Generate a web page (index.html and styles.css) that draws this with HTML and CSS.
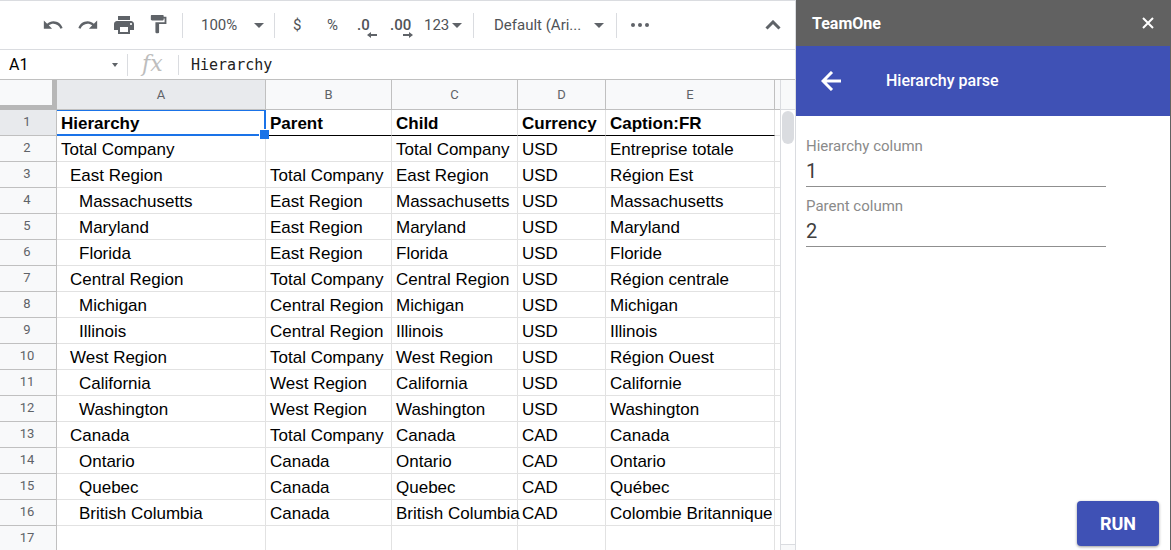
FILE: index.html
```html
<!DOCTYPE html>
<html lang="en">
<head>
<meta charset="utf-8">
<title>Hierarchy sheet</title>
<link rel="stylesheet" href="styles.css">
</head>
<body>
<main class="editor">
  <div class="toolbar">
    <div class="actions">
      <button class="tool" aria-label="Undo"><svg width="22" height="22" viewBox="0 0 24 24"><path d="M12.5 8c-2.65 0-5.05.99-6.9 2.6L2 7v9h9l-3.62-3.62c1.39-1.16 3.16-1.88 5.12-1.88 3.54 0 6.55 2.31 7.6 5.5l2.37-.78C21.08 11.03 17.15 8 12.5 8z"/></svg></button>
      <button class="tool" aria-label="Redo"><svg width="22" height="22" viewBox="0 0 24 24"><path d="M18.4 10.6C16.55 8.99 14.15 8 11.5 8c-4.65 0-8.58 3.03-9.96 7.22L3.9 16c1.05-3.19 4.05-5.5 7.6-5.5 1.95 0 3.73.72 5.12 1.88L13 16h9V7l-3.6 3.6z"/></svg></button>
      <button class="tool" aria-label="Print"><svg width="24" height="24" viewBox="0 0 24 24"><path d="M19 8H5c-1.66 0-3 1.34-3 3v6h4v4h12v-4h4v-6c0-1.66-1.34-3-3-3zm-3 11H8v-5h8v5zm3-7c-.55 0-1-.45-1-1s.45-1 1-1 1 .45 1 1-.45 1-1 1zM18 3H6v4h12V3z"/></svg></button>
      <button class="tool" aria-label="Paint format"><svg width="22" height="22" viewBox="0 0 24 24"><path d="M18 4V3c0-.55-.45-1-1-1H5c-.55 0-1 .45-1 1v4c0 .55.45 1 1 1h12c.55 0 1-.45 1-1V6h1v4H9v11c0 .55.45 1 1 1h2c.55 0 1-.45 1-1v-9h8V4h-3z" transform="translate(-2 -1)"/></svg></button>
    </div>
    <button class="menu zoom">100%<i class="caret"></i></button>
    <div class="formats">
      <button class="tool">$</button>
      <button class="tool percent">%</button>
      <button class="tool decimal">.0<svg class="arrow" width="10" height="6" viewBox="0 0 10 6"><path d="M0 3l4-3v2h6v2H4v2z"/></svg></button>
      <button class="tool decimal">.00<svg class="arrow" width="10" height="6" viewBox="0 0 10 6"><path d="M10 3L6 0v2H0v2h6v2z"/></svg></button>
      <button class="tool number">123<i class="caret"></i></button>
    </div>
    <button class="menu font">Default (Ari...<i class="caret"></i></button>
    <button class="tool more" aria-label="More"><svg width="18" height="4" viewBox="0 0 18 4"><circle cx="2" cy="2" r="2"/><circle cx="9" cy="2" r="2"/><circle cx="16" cy="2" r="2"/></svg></button>
    <button class="tool collapse" aria-label="Hide menus"><svg width="16" height="10" viewBox="0 0 16 10"><path class="line" d="M1.5 8.5L8 2l6.500 6.500"/></svg></button>
  </div>
  <div class="formula">
    <button class="name">A1<i class="caret small"></i></button>
    <span class="fx">fx</span>
    <input class="value" aria-label="Formula" value="Hierarchy">
  </div>
  <div class="sheet">
    <div class="grid">
      <table>
        <colgroup><col class="c-num"><col class="c-a"><col class="c-b"><col class="c-b"><col class="c-d"><col class="c-e"><col></colgroup>
        <thead><tr><th class="corner"></th><th class="active">A</th><th>B</th><th>C</th><th>D</th><th>E</th><th></th></tr></thead>
        <tbody>
          <tr class="titles"><th class="active">1</th><td class="selected">Hierarchy</td><td>Parent</td><td>Child</td><td>Currency</td><td>Caption:FR</td><td></td></tr>
          <tr><th>2</th><td>Total Company</td><td></td><td>Total Company</td><td>USD</td><td>Entreprise totale</td><td></td></tr>
          <tr><th>3</th><td class="l1">East Region</td><td>Total Company</td><td>East Region</td><td>USD</td><td>Région Est</td><td></td></tr>
          <tr><th>4</th><td class="l2">Massachusetts</td><td>East Region</td><td>Massachusetts</td><td>USD</td><td>Massachusetts</td><td></td></tr>
          <tr><th>5</th><td class="l2">Maryland</td><td>East Region</td><td>Maryland</td><td>USD</td><td>Maryland</td><td></td></tr>
          <tr><th>6</th><td class="l2">Florida</td><td>East Region</td><td>Florida</td><td>USD</td><td>Floride</td><td></td></tr>
          <tr><th>7</th><td class="l1">Central Region</td><td>Total Company</td><td>Central Region</td><td>USD</td><td>Région centrale</td><td></td></tr>
          <tr><th>8</th><td class="l2">Michigan</td><td>Central Region</td><td>Michigan</td><td>USD</td><td>Michigan</td><td></td></tr>
          <tr><th>9</th><td class="l2">Illinois</td><td>Central Region</td><td>Illinois</td><td>USD</td><td>Illinois</td><td></td></tr>
          <tr><th>10</th><td class="l1">West Region</td><td>Total Company</td><td>West Region</td><td>USD</td><td>Région Ouest</td><td></td></tr>
          <tr><th>11</th><td class="l2">California</td><td>West Region</td><td>California</td><td>USD</td><td>Californie</td><td></td></tr>
          <tr><th>12</th><td class="l2">Washington</td><td>West Region</td><td>Washington</td><td>USD</td><td>Washington</td><td></td></tr>
          <tr><th>13</th><td class="l1">Canada</td><td>Total Company</td><td>Canada</td><td>CAD</td><td>Canada</td><td></td></tr>
          <tr><th>14</th><td class="l2">Ontario</td><td>Canada</td><td>Ontario</td><td>CAD</td><td>Ontario</td><td></td></tr>
          <tr><th>15</th><td class="l2">Quebec</td><td>Canada</td><td>Quebec</td><td>CAD</td><td>Québec</td><td></td></tr>
          <tr><th>16</th><td class="l2">British Columbia</td><td>Canada</td><td>British Columbia</td><td>CAD</td><td>Colombie Britannique</td><td></td></tr>
          <tr><th>17</th><td></td><td></td><td></td><td></td><td></td><td></td></tr>
        </tbody>
      </table>
    </div>
    <div class="scrollbar"><div class="track"><div class="thumb"></div></div></div>
  </div>
</main>
<aside class="sidebar">
  <header class="brand"><h1>TeamOne</h1><button class="close" aria-label="Close"><svg width="12" height="12" viewBox="0 0 12 12"><path d="M1 1l10 10M11 1L1 11"/></svg></button></header>
  <div class="appbar"><button class="back" aria-label="Back"><svg width="22" height="20" viewBox="0 0 22 20"><path d="M20 10H2M11 1L2 10l9 9"/></svg></button><h2>Hierarchy parse</h2></div>
  <form class="form">
    <label for="hierarchy">Hierarchy column</label>
    <input id="hierarchy" value="1">
    <label for="parent">Parent column</label>
    <input id="parent" value="2">
    <button class="run" type="button">RUN</button>
  </form>
</aside>
</body>
</html>
```

FILE: styles.css
```css
* { box-sizing: border-box; }
body {
  margin: 0;
  display: flex;
  height: 100vh;
  overflow: hidden;
  font-family: Roboto, "Liberation Sans", sans-serif;
  background: #fff;
}
button {
  padding: 0;
  border: 0;
  background: none;
  font: inherit;
  color: inherit;
}
svg { display: block; }
input { border: 0; outline: 0; background: none; padding: 0; }

.editor {
  flex: 1;
  min-width: 0;
  display: flex;
  flex-direction: column;
  border-right: 1px solid #dadce0;
}
.toolbar {
  flex: none;
  display: flex;
  align-items: center;
  height: 50px;
  padding-right: 14px;
  border-top: 1px solid #dadce0;
  border-bottom: 1px solid #dadce0;
  font-size: 15px;
  color: #505357;
}
.toolbar svg { fill: #5f6368; }
.actions {
  display: flex;
  align-items: center;
  gap: 13px;
  width: 183px;
  height: 25px;
  padding-left: 42px;
  border-right: 1px solid #dadce0;
}
.menu {
  display: flex;
  align-items: center;
  justify-content: space-between;
  height: 25px;
  border-right: 1px solid #dadce0;
}
.zoom { width: 92px; padding: 0 10px 0 18px; }
.font { width: 143px; padding: 0 12px 0 20px; }
.caret {
  border: 5px solid transparent;
  border-top-color: #5f6368;
  border-bottom: 0;
}
.caret.small { border-width: 4px 3px 0; }
.formats {
  display: flex;
  align-items: center;
  height: 25px;
  width: 199px;
  padding-left: 18px;
  border-right: 1px solid #dadce0;
}
.formats .tool { width: 34px; text-align: left; }
.formats .percent { width: 30px; }
.formats .decimal { position: relative; width: 33px; font-weight: 500; }
.formats .number { display: flex; align-items: center; gap: 3px; width: auto; margin-left: 1px; }
.arrow { position: absolute; right: 13px; bottom: -4px; }
.decimal + .decimal .arrow { right: 10px; }
.more { margin-left: 14px; }
.collapse { margin-left: auto; }
.line { fill: none; stroke: #5f6368; stroke-width: 3; }

.formula {
  flex: none;
  display: flex;
  align-items: center;
  height: 30px;
  border-bottom: 1px solid #c0c0c0;
}
.formula .name {
  display: flex;
  align-items: center;
  justify-content: space-between;
  width: 128px;
  height: 22px;
  padding: 0 9px;
  border-right: 1px solid #dadce0;
  font-size: 16px;
  color: #000;
}
.fx {
  width: 51px;
  height: 20px;
  padding-left: 14px;
  border-right: 1px solid #dadce0;
  font: italic 22px/18px "DejaVu Serif", serif;
  color: #bdbdbd;
}
.value {
  flex: 1;
  min-width: 0;
  padding-left: 12px;
  font: 15px "DejaVu Sans Mono", monospace;
  color: #222;
}

.sheet { flex: 1; min-height: 0; display: flex; }
.grid { flex: 1; min-width: 0; overflow: hidden; }
table {
  width: 100%;
  table-layout: fixed;
  border-collapse: separate;
  border-spacing: 0;
}
.c-num { width: 57px; }
.c-a { width: 209px; }
.c-b { width: 126px; }
.c-d { width: 88px; }
.c-e { width: 169px; }
th, td {
  height: 26px;
  border-right: 1px solid #e2e2e2;
  border-bottom: 1px solid #e2e2e2;
  white-space: nowrap;
}
td {
  padding: 2px 0 0 4px;
  font-family: "Liberation Sans", Arial, sans-serif;
  font-size: 17px;
  line-height: 23px;
  color: #000;
}
th {
  padding: 0;
  background: #f8f9fa;
  border-color: #c0c0c0;
  font-size: 13px;
  font-weight: 400;
  line-height: 23px;
  color: #5f6368;
  text-align: center;
}
tbody th { padding: 0 2px 2px 0; }
thead th { height: 30px; }
th.active { background: #e8eaed; }
th.corner { border: solid #b7b7b7; border-width: 0 5px 5px 0; }
tr > :last-child { border-right: 0; }
.l1 { padding-left: 13px; }
.l2 { padding-left: 22px; }
.titles td { font-weight: 700; border-bottom-color: #000; }
.titles td:last-child { border-bottom-color: #e2e2e2; }
.titles .selected { position: relative; box-shadow: inset 0 1px #1a73e8, inset -1px -1px #1a73e8; border-color: #1a73e8; }
.selected::after {
  content: "";
  position: absolute;
  right: -4px;
  bottom: -4px;
  width: 9px;
  height: 9px;
  border: solid #fff;
  border-width: 1px 0 0 1px;
  background: #1a73e8;
}
.scrollbar {
  display: flex;
  flex-direction: column;
  width: 15px;
  padding-top: 29px;
  padding-bottom: 5px;
  border-left: 1px solid #dadce0;
  background: #f8f9fa;
}
.track {
  flex: 1;
  padding: 1px;
  border: solid #dadce0;
  border-width: 1px 0;
  background: #fff;
}
.thumb { width: 12px; height: 33px; border-radius: 6px; background: #dadce0; }

.sidebar {
  flex: none;
  display: flex;
  flex-direction: column;
  width: 375px;
  border-right: 1px solid #616161;
}
h1, h2 { margin: 0; font-size: 16px; color: #fff; }
h2 { font-weight: 500; }
.brand {
  display: flex;
  align-items: center;
  justify-content: space-between;
  height: 46px;
  padding: 0 16px;
  background: #616161;
}
.close svg, .back svg { fill: none; stroke: #fff; stroke-width: 3; }
.close svg { stroke-width: 2; }
.appbar {
  display: flex;
  align-items: center;
  gap: 43px;
  height: 70px;
  padding: 0 0 1px 25px;
  background: #3f51b5;
}
.form {
  flex: 1;
  display: flex;
  flex-direction: column;
  padding: 20px 11px 4px 10px;
}
.form label { font-size: 15px; line-height: 20px; color: #8a8a8a; }
.form input {
  width: 300px;
  height: 31px;
  margin-bottom: 9px;
  border-bottom: 1px solid #8f8f8f;
  font: 20px Roboto, sans-serif;
  color: #404040;
}
.run {
  align-self: flex-end;
  width: 82px;
  height: 45px;
  margin-top: auto;
  border-radius: 4px;
  background: #3f51b5;
  box-shadow: 0 1px 3px rgba(0, 0, 0, .4);
  font-size: 18px;
  font-weight: 700;
  color: #fff;
}
```
